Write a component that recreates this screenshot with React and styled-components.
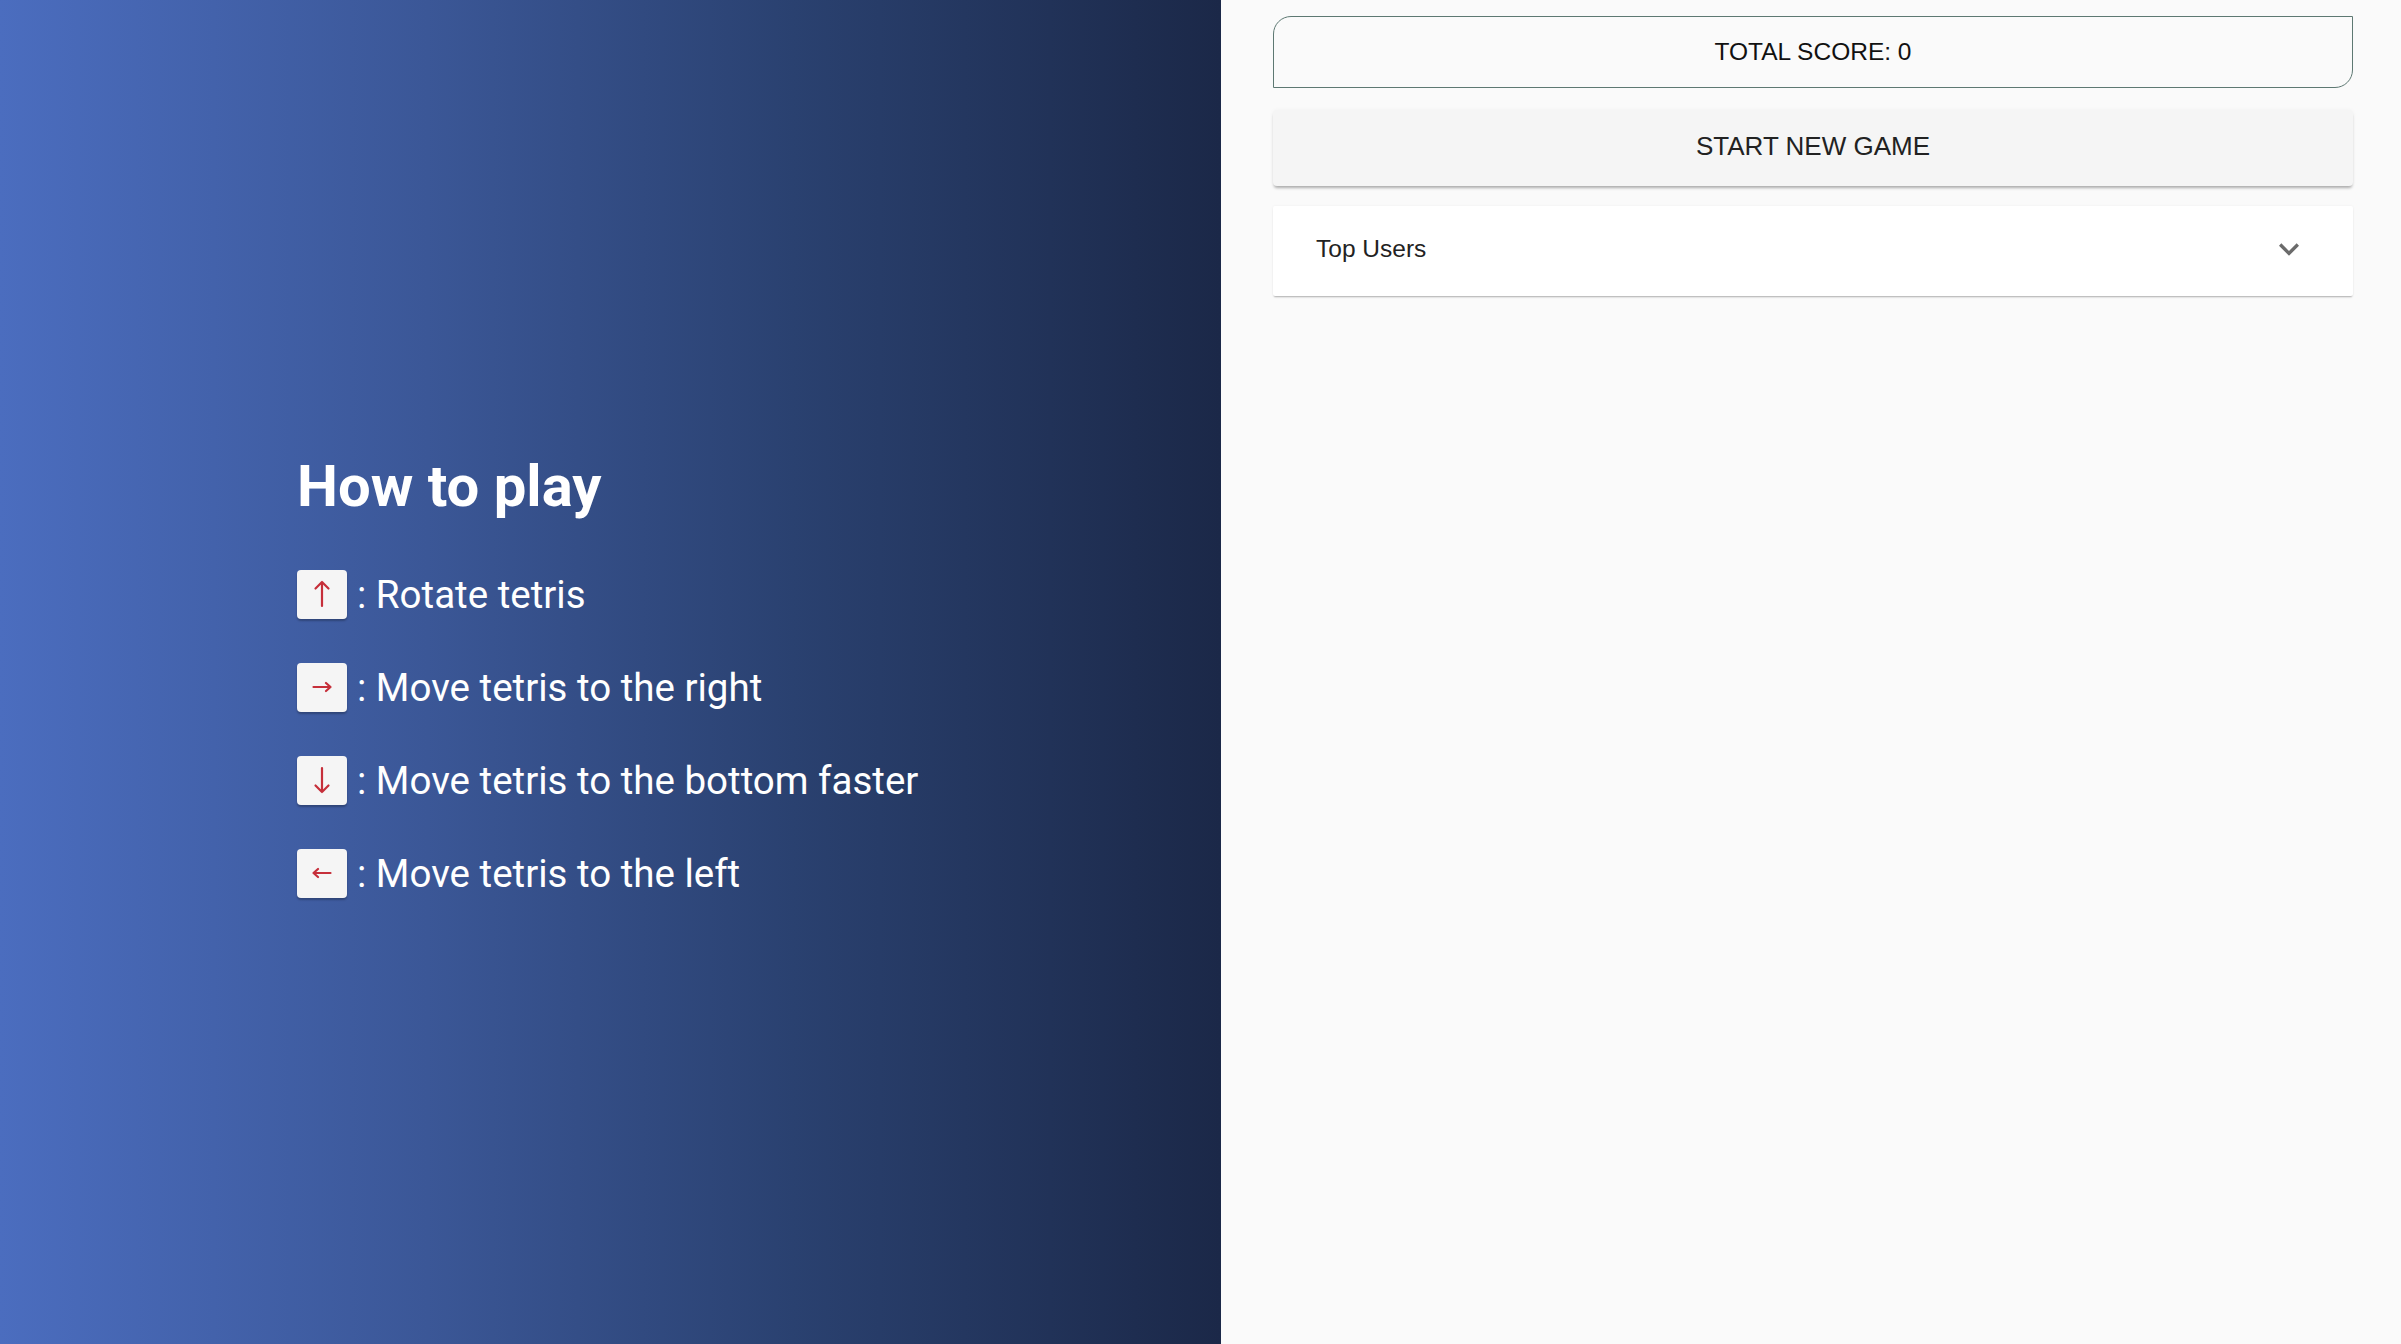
import React from 'react'
import styled, { createGlobalStyle } from 'styled-components'

const GlobalStyle = createGlobalStyle`
  *, *::before, *::after {
    box-sizing: border-box;
  }
  html, body {
    margin: 0;
    padding: 0;
    height: 100%;
    background: #fafafa;
  }
  #root {
    height: 100%;
  }
`

const Page = styled.div`
  display: flex;
  height: 1344px;
  width: 100%;
  overflow: hidden;
`

const Guide = styled.section`
  width: 1221px;
  flex-shrink: 0;
  display: flex;
  flex-direction: column;
  justify-content: center;
  padding: 6px 0 0 297px;
  background: linear-gradient(90deg, #4b6dbf 0%, #3b5797 35%, #2a4170 65%, #1b2848 100%);
  font-family: Roboto, "Liberation Sans", sans-serif;
  color: #fff;
`

const Heading = styled.h2`
  margin: 0 0 48px;
  font-size: 58px;
  font-weight: 700;
  line-height: 1.2;
`

const Controls = styled.ul`
  list-style: none;
  margin: 0;
  padding: 0;
  display: flex;
  flex-direction: column;
  gap: 44px;
`

const Control = styled.li`
  display: flex;
  align-items: center;
  gap: 10px;
  font-size: 38.5px;
  line-height: 49px;
`

const Key = styled.span`
  width: 50px;
  height: 49px;
  display: flex;
  align-items: center;
  justify-content: center;
  background: #f5f5f5;
  border-radius: 4px;
  box-shadow: 0 2px 2px rgba(0, 0, 0, 0.25);
`

const Board = styled.aside`
  flex: 1;
  display: flex;
  flex-direction: column;
  gap: 20px;
  padding: 16px 48px 0 52px;
  font-family: "Liberation Sans", Arial, sans-serif;
  font-size: 24.5px;
  color: #1f1f1f;
`

const Score = styled.div`
  height: 72px;
  display: flex;
  align-items: center;
  justify-content: center;
  border: 1.5px solid #5d7872;
  border-radius: 18px 0 18px 0;
  background: #fafafa;
  color: #111;
`

const StartButton = styled.button`
  height: 76px;
  margin-top: 2px;
  padding: 0 0 3px;
  border: none;
  border-radius: 4px;
  background: #f5f5f5;
  box-shadow: 0 3px 3px -1px rgba(0, 0, 0, 0.3), 0 0 4px rgba(0, 0, 0, 0.04);
  font-family: inherit;
  font-size: 26px;
  color: #222;
  text-transform: uppercase;
  cursor: pointer;
`

const Accordion = styled.div`
  height: 90px;
  display: flex;
  align-items: center;
  justify-content: space-between;
  padding: 0 44px 4px 43px;
  background: #fff;
  border-radius: 2px;
  box-shadow: 0 2px 2px -1px rgba(0, 0, 0, 0.3), 0 0 3px rgba(0, 0, 0, 0.05);
  color: #222;
`

const arrowPaths = {
  up: 'M10 27V3M3.5 9.5L10 3l6.5 6.5',
  down: 'M10 3v24M3.5 20.5L10 27l6.5-6.5',
  right: 'M1.5 15h17M14 11l4.5 4-4.5 4',
  left: 'M18.5 15H1.5M6 11l-4.5 4L6 19',
}

function Arrow({ dir }) {
  return (
    <svg
      width="20"
      height="30"
      viewBox="0 0 20 30"
      fill="none"
      stroke="#c62f3a"
      strokeWidth="2.2"
      strokeLinecap="round"
      strokeLinejoin="round"
    >
      <path d={arrowPaths[dir]} />
    </svg>
  )
}

function ExpandMore() {
  return (
    <svg width="40" height="40" viewBox="0 0 24 24" fill="#6b6b6b">
      <path d="M16.59 8.59 12 13.17 7.41 8.59 6 10l6 6 6-6z" />
    </svg>
  )
}

const controls = [
  { dir: 'up', label: ': Rotate tetris' },
  { dir: 'right', label: ': Move tetris to the right' },
  { dir: 'down', label: ': Move tetris to the bottom faster' },
  { dir: 'left', label: ': Move tetris to the left' },
]

export default function App() {
  return (
    <>
      <GlobalStyle />
      <Page>
        <Guide>
          <Heading>How to play</Heading>
          <Controls>
            {controls.map(c => (
              <Control key={c.dir}>
                <Key>
                  <Arrow dir={c.dir} />
                </Key>
                {c.label}
              </Control>
            ))}
          </Controls>
        </Guide>
        <Board>
          <Score>TOTAL SCORE: 0</Score>
          <StartButton>Start new game</StartButton>
          <Accordion>
            <span>Top Users</span>
            <ExpandMore />
          </Accordion>
        </Board>
      </Page>
    </>
  )
}
